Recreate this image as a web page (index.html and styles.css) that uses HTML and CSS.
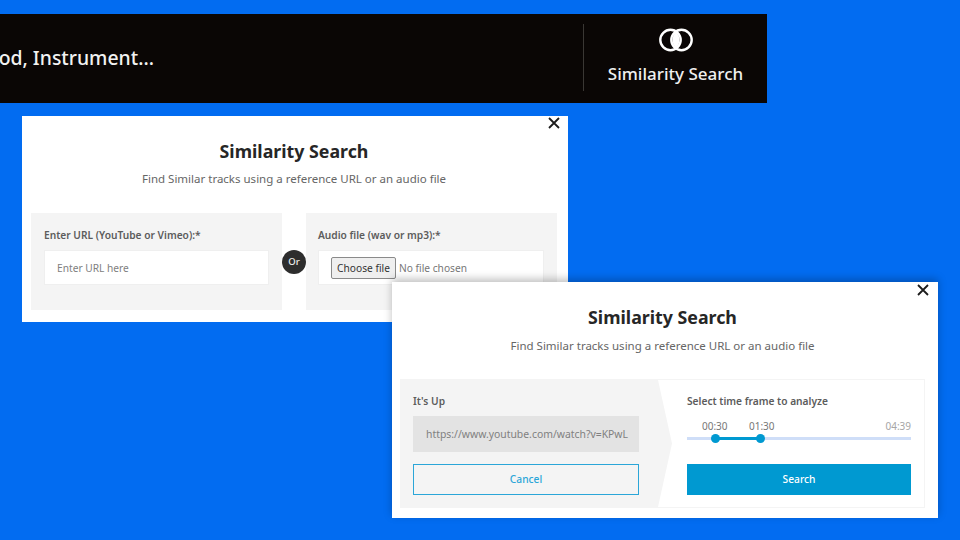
FILE: index.html
```html
<!DOCTYPE html>
<html lang="en">
<head>
<meta charset="utf-8">
<title>Similarity Search</title>
<link rel="stylesheet" href="styles.css">
</head>
<body>
<div class="canvas">
  <header class="banner">
    <div class="query"><span class="query-text">od, Instrument...</span></div>
    <div class="brand">
      <svg class="brand-icon" width="36" height="24" viewBox="0 0 36 24" aria-hidden="true">
        <path d="M18 4.2a10.2 10.2 0 0 1 0 15.6a10.2 10.2 0 0 1 0-15.6z" fill="#fff"/>
        <circle cx="12.5" cy="12" r="10.2" fill="none" stroke="#fff" stroke-width="2.4"/>
        <circle cx="23.5" cy="12" r="10.2" fill="none" stroke="#fff" stroke-width="2.4"/>
      </svg>
      <div class="brand-name">Similarity Search</div>
    </div>
  </header>

  <section class="modal modal-first">
    <button class="close" type="button" aria-label="Close"><svg width="12" height="12" viewBox="0 0 12 12"><path d="M1 1l10 10M11 1L1 11" stroke="#1c1c1c" stroke-width="1.8" fill="none"/></svg></button>
    <h2 class="title">Similarity Search</h2>
    <p class="subtitle">Find Similar tracks using a reference URL or an audio file</p>
    <div class="choice">
      <div class="choice-panel">
        <div class="label">Enter URL (YouTube or Vimeo):*</div>
        <div class="field"><span class="placeholder">Enter URL here</span></div>
      </div>
      <div class="or-col"><span class="or">Or</span></div>
      <div class="choice-panel choice-panel-file">
        <div class="label">Audio file (wav or mp3):*</div>
        <div class="field field-file"><span class="file-btn">Choose file</span><span class="file-none">No file chosen</span></div>
      </div>
    </div>
  </section>

  <section class="modal modal-second">
    <button class="close" type="button" aria-label="Close"><svg width="12" height="12" viewBox="0 0 12 12"><path d="M1 1l10 10M11 1L1 11" stroke="#1c1c1c" stroke-width="1.8" fill="none"/></svg></button>
    <h2 class="title">Similarity Search</h2>
    <p class="subtitle">Find Similar tracks using a reference URL or an audio file</p>
    <div class="analyze">
      <div class="analyze-left">
        <div class="label">It's Up</div>
        <div class="url-box"><span class="url-text">https://www.youtube.com/watch?v=KPwL</span></div>
        <div class="cancel">Cancel</div>
      </div>
      <div class="analyze-right">
        <div class="label">Select time frame to analyze</div>
        <div class="slider">
          <div class="times"><span class="time t-start">00:30</span><span class="time t-end">01:30</span><span class="time t-total">04:39</span></div>
          <div class="track"><div class="range"></div></div>
        </div>
        <div class="search">Search</div>
      </div>
    </div>
  </section>
</div>
</body>
</html>
```

FILE: styles.css
```css
* { box-sizing: border-box; }
html, body { margin: 0; padding: 0; }
body {
  width: 960px;
  height: 540px;
  overflow: hidden;
  background: #026cf1;
  font-family: "Noto Sans", "Open Sans", sans-serif;
}
.canvas { position: relative; width: 960px; height: 540px; }

.banner {
  position: absolute;
  left: 0;
  top: 14px;
  width: 767px;
  height: 89px;
  display: flex;
  align-items: center;
  background: #0a0605;
  color: #fff;
}
.query {
  width: 154px;
  display: flex;
  justify-content: flex-end;
  white-space: nowrap;
  margin-right: 429px;
  margin-top: -2px;
}
.query-text { font-size: 19.4px; font-weight: 500; flex: none; color: #f2f2f2; }
.brand {
  height: 67px;
  margin-top: -2px;
  border-left: 1px solid #3a3734;
  flex: 1;
  display: flex;
  flex-direction: column;
  align-items: center;
}
.brand-icon { margin-top: 4px; }
.brand-name { font-size: 17px; font-weight: 500; line-height: 24px; margin-top: 10px; color: #efefef; white-space: nowrap; }

.modal {
  position: absolute;
  width: 546px;
  background: #fff;
  text-align: center;
}
.modal-first { left: 22px; top: 116px; height: 206px; padding: 0 11px 0 9px; }
.modal-second {
  left: 392px;
  top: 282px;
  height: 236px;
  padding: 0 13px 0 8px;
  box-shadow: 0 -3px 8px rgba(0, 0, 0, .25);
}
.close {
  position: absolute;
  right: 8px;
  top: 1px;
  width: 12px;
  height: 12px;
  padding: 0;
  border: 0;
  background: none;
  line-height: 0;
}
.modal-second .close { top: 2px; right: 9px; }
.title {
  margin: 24px 0 0;
  font-size: 17.8px;
  line-height: 22px;
  font-weight: 700;
  color: #262626;
}
.subtitle {
  margin: 8px 0 0;
  font-size: 11.5px;
  line-height: 18px;
  color: #666;
}
.modal-second .subtitle { margin-top: 9px; }
.label {
  font-size: 10.2px;
  line-height: 14px;
  font-weight: 600;
  color: #5c5c5c;
  text-align: left;
}

.choice {
  margin-top: 25px;
  display: grid;
  grid-template-columns: 251px 24px 251px;
  height: 97px;
}
.choice-panel { background: #f4f4f4; padding: 15px 13px 0; }
.choice-panel-file { padding-left: 12px; }
.or-col { display: flex; justify-content: center; align-items: center; }
.or {
  width: 24px;
  height: 24px;
  flex: none;
  border-radius: 50%;
  background: #2d2d2d;
  color: #eee;
  font-size: 9.5px;
  line-height: 24px;
  font-weight: 500;
}
.field {
  margin-top: 8px;
  height: 35px;
  background: #fff;
  border: 1px solid #efefef;
  display: flex;
  align-items: center;
  padding: 0 12px;
}
.placeholder { font-size: 10.2px; color: #808080; }
.file-btn {
  width: 65px;
  height: 22px;
  flex: none;
  background: #efefef;
  border: 1px solid #8a8a8a;
  border-radius: 2px;
  font-size: 10.2px;
  line-height: 20px;
  color: #333;
}
.file-none { margin-left: 3px; font-size: 10.2px; color: #777; }

.analyze {
  margin-top: 24px;
  height: 129px;
  display: grid;
  grid-template-columns: 272px 1fr;
  border: 1px solid #f4f4f4;
  border-left: 0;
}
.analyze-left {
  background: #f4f4f4;
  clip-path: polygon(0 0, 258px 0, 272px 50%, 258px 100%, 0 100%);
  padding: 14px 33px 0 13px;
}
.url-box {
  margin-top: 8px;
  height: 36px;
  background: #e3e3e3;
  display: flex;
  align-items: center;
  padding: 0 13px;
  white-space: nowrap;
}
.url-text { font-size: 10.4px; color: #808080; }
.cancel {
  margin-top: 12px;
  height: 31px;
  border: 1px solid #2ba6d8;
  font-size: 10.2px;
  line-height: 29px;
  font-weight: 500;
  color: #2ba6d8;
}
.analyze-right { padding: 14px 13px 0 15px; }
.slider { position: relative; height: 41px; }
.times { position: relative; height: 20px; }
.time {
  position: absolute;
  top: 11px;
  font-size: 10px;
  line-height: 14px;
  color: #777;
}
.t-start { left: 15px; }
.t-end { left: 62px; }
.t-total { right: 0; color: #a6a6a6; }
.track {
  position: absolute;
  left: 0;
  right: 0;
  top: 29px;
  height: 3px;
  background: #cfdef8;
}
.range {
  position: absolute;
  left: 28px;
  width: 46px;
  top: 0;
  height: 3px;
  background: #0099d1;
}
.range::before, .range::after {
  content: "";
  position: absolute;
  top: -3px;
  width: 9px;
  height: 9px;
  border-radius: 50%;
  background: #0099d1;
}
.range::before { left: -4px; }
.range::after { right: -4px; }
.search {
  margin-top: 15px;
  height: 31px;
  background: #0099d1;
  color: #fff;
  font-size: 10.2px;
  line-height: 31px;
  font-weight: 500;
  text-align: center;
}
```
